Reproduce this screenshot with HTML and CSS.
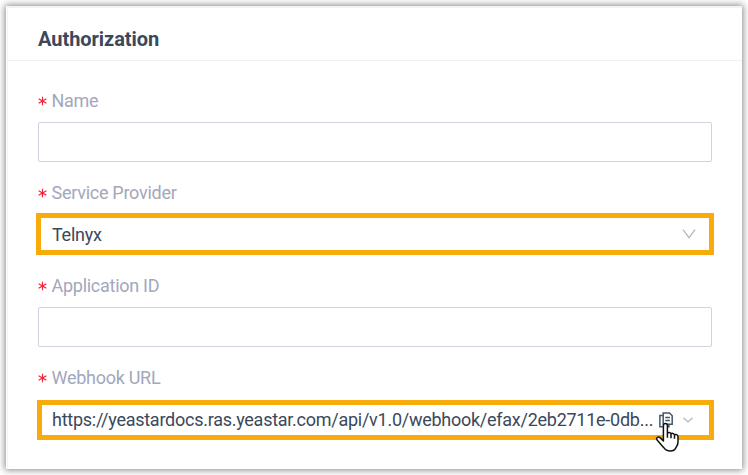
FILE: index.html
```html
<!DOCTYPE html>
<html lang="en">
<head>
<meta charset="utf-8">
<title>Authorization</title>
<link rel="stylesheet" href="styles.css">
</head>
<body>
<main class="card">
  <header class="card-header"><h1>Authorization</h1></header>
  <form class="form">
    <div class="field">
      <div class="label"><svg class="star" viewBox="0 0 10 10"><path d="M5 .3v9.4M.7 2.5l8.6 5M.7 7.5l8.6-5"/></svg><span class="label-text">Name</span></div>
      <div class="input"></div>
    </div>
    <div class="field provider">
      <div class="label"><svg class="star" viewBox="0 0 10 10"><path d="M5 .3v9.4M.7 2.5l8.6 5M.7 7.5l8.6-5"/></svg><span class="label-text">Service Provider</span></div>
      <div class="select">
        <span class="value">Telnyx</span>
        <svg class="chevron" viewBox="0 0 14 10"><path d="M1 .7l6 8 6-8"/></svg>
      </div>
    </div>
    <div class="field application">
      <div class="label"><svg class="star" viewBox="0 0 10 10"><path d="M5 .3v9.4M.7 2.5l8.6 5M.7 7.5l8.6-5"/></svg><span class="label-text">Application ID</span></div>
      <div class="input"></div>
    </div>
    <div class="field webhook">
      <div class="label"><svg class="star" viewBox="0 0 10 10"><path d="M5 .3v9.4M.7 2.5l8.6 5M.7 7.5l8.6-5"/></svg><span class="label-text">Webhook URL</span></div>
      <div class="select url">
        <span class="value">https://yeastardocs.ras.yeastar.com/api/v1.0/webhook/efax/2eb2711e-0db...</span>
        <span class="copy">
          <svg class="copy-icon" viewBox="0 0 14 16"><path d="M4.2 1h6.3l2.7 2.7v8.6h-9zM4 3.4H.9v11.3h9v-2.2M6.3 5.6h4.6M6.3 8.4h4.6"/></svg>
          <svg class="cursor" viewBox="0 0 24 30"><path d="M8.4 17V3.6c0-2.9 4-2.9 4 0v8c.5-1.5 3.4-1.3 3.6.5.6-1.2 3.2-.9 3.5.9.8-1 3.5-.5 3.5 1.7v5.2c0 3.3-1.3 4.2-2.2 6-1 2.2-2.6 3.1-5.3 3.1-3.6 0-5.3-1.2-6.9-3.6L1.9 17.8c-1.2-2.1 1.4-3.7 3.1-2.2L8.4 19V17M12.4 11.6v4.1M16 12.5v3.8M19.5 13.3v3.4"/></svg>
        </span>
        <svg class="chevron small" viewBox="0 0 10 6"><path d="M.6 .7l4.4 4.2 4.4-4.2"/></svg>
      </div>
    </div>
  </form>
</main>
</body>
</html>
```
FILE: styles.css
```css
* { box-sizing: border-box; }
body {
  margin: 0;
  padding: 6px;
  background: #fff;
  font-family: Roboto, "Liberation Sans", sans-serif;
  font-size: 18px;
  color: #3b485a;
}
svg { display: block; fill: none; flex: none; }
.card {
  width: 736px;
  height: 463px;
  background: #fff;
  box-shadow: 0 0 7px 1px rgba(0, 0, 0, .48), inset 2px 1px 0 -1px #fff, inset 2px 2px 0 #f3f3f3;
}
.card-header {
  height: 55px;
  margin-left: 2px;
  padding: 18px 30px 0;
  border-bottom: 1px solid #f0f0f3;
}
h1 { margin: 0; font-size: 20px; line-height: 30px; font-weight: 700; letter-spacing: -.05px; }
.form { padding: 28px 30px 0 32px; }
.label { display: flex; align-items: center; height: 24px; color: #a3a7bc; }
.star { width: 9px; height: 10px; margin: 0 4.5px 0 0; stroke: #f5203a; stroke-width: 1.3; }
.label-text { line-height: 24px; white-space: nowrap; letter-spacing: -.27px; }
.input { height: 40px; margin-top: 9px; border: 1px solid #d0d2df; border-radius: 2px; }
.provider { margin-top: 19px; }
.select {
  display: flex;
  align-items: center;
  height: 42px;
  margin: 8px -2px 0;
  padding: 0 13px 0 11px;
  border: 5px solid #f9ab0b;
}
.value { line-height: 24px; white-space: nowrap; letter-spacing: -.26px; }
.provider .value { padding-top: 2px; }
.provider .chevron { margin-left: auto; }
.chevron { width: 14px; height: 10px; stroke: #b5b5b5; stroke-width: 1.2; }
.application { margin-top: 19px; }
.webhook { margin-top: 19px; }
.url { height: 40px; margin: 10px -2px 0 -1px; padding: 0 16px 0 10px; }
.copy { position: relative; margin-left: auto; }
.copy-icon { width: 14px; height: 16px; stroke: #465468; stroke-width: 1.5; }
.cursor { position: absolute; left: -4px; top: 10px; width: 24px; height: 30px; fill: #fff; stroke: #111; stroke-width: 1.5; stroke-linejoin: round; }
.small { width: 10px; height: 6px; margin-left: 10px; }
```
